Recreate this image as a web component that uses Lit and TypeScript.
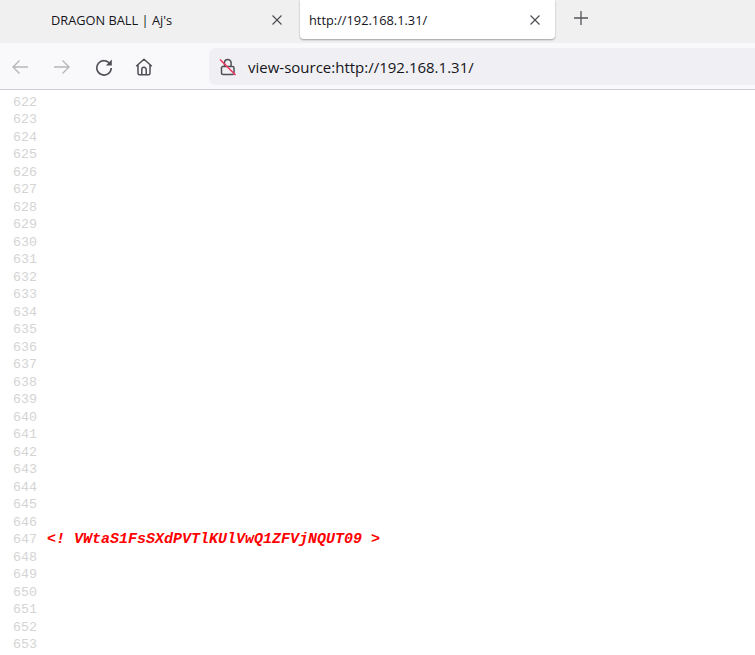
import { LitElement, html, css } from "lit";
import { customElement } from "lit/decorators.js";

const closeIcon = html`<svg class="x" width="12" height="12" viewBox="0 0 12 12"><path d="M1.5 1.5l9 9M10.5 1.5l-9 9" stroke="#4a4a4f" stroke-width="1.1" fill="none"/></svg>`;

@customElement("app-root")
export class AppRoot extends LitElement {
  static styles = css`
    :host { display: block; width: 755px; height: 655px; overflow: hidden; background: #fff; font-family: "Open Sans", "Noto Sans", sans-serif; }
    .tabs { height: 43px; background: #f0f0f0; display: flex; box-sizing: border-box; }
    .tab { display: flex; align-items: center; box-sizing: border-box; height: 39px; font-size: 12.8px; color: #15141a; font-weight: 400; }
    .tab.bg { width: 300px; padding: 0 17px 0 51px; justify-content: space-between; }
    .tab.active { width: 255px; background: #fff; border-radius: 0 0 4px 4px; padding: 0 14px 0 9px; justify-content: space-between; box-shadow: 0 1px 2px rgba(0,0,0,.35); }
    .plus { margin: 10px 0 0 18px; width: 16px; height: 16px; }
    .toolbar { height: 47px; box-sizing: border-box; background: #f9f9fb; border-bottom: 1px solid #cfcfd8; display: flex; align-items: flex-start; }
    .nav { width: 209px; height: 46px; display: flex; align-items: center; padding: 2px 0 0 11px; gap: 24px; box-sizing: border-box; }
    .nav svg { flex: none; display: block; }
    .nav .home { margin-left: -2px; }
    .url { flex: 1; height: 37px; margin-top: 5px; background: #f0f0f4; border-radius: 6px 0 0 6px; display: flex; align-items: center; padding-left: 10px; gap: 11px; font-size: 15px; color: #15141a; }
    .url svg { flex: none; }
    .source { padding-top: 3.9px; font-family: "Liberation Mono", monospace; font-size: 13.33px; line-height: 17.5px; }
    .row { display: flex; height: 17.5px; white-space: pre; }
    .num { width: 37px; text-align: right; color: #d4d4d4; flex: none; margin-right: 10px; }
    .code { color: #f00; font-size: 15px; font-weight: bold; font-style: italic; }
  `;

  render() {
    const rows = [];
    for (let n = 622; n <= 653; n++) rows.push(n);
    return html`
      <div class="tabs">
        <div class="tab bg"><span>DRAGON BALL | Aj's</span>${closeIcon}</div>
        <div class="tab active"><span>http://192.168.1.31/</span>${closeIcon}</div>
        <svg class="plus" viewBox="0 0 16 16"><path d="M8 1v14M1 8h14" stroke="#55555a" stroke-width="1.3" fill="none"/></svg>
      </div>
      <div class="toolbar">
        <div class="nav">
          <svg width="18" height="16" viewBox="0 0 18 16"><path d="M17 8H2M8.5 1.5L2 8l6.5 6.5" stroke="#b6b6bb" stroke-width="1.4" fill="none"/></svg>
          <svg width="18" height="16" viewBox="0 0 18 16"><path d="M1 8h15M9.5 1.5L16 8l-6.5 6.5" stroke="#b6b6bb" stroke-width="1.4" fill="none"/></svg>
          <svg width="18" height="18" viewBox="0 0 18 18"><path d="M15.2 6.2A7.2 7.2 0 1 0 16.2 10" stroke="#4f4f55" stroke-width="1.6" fill="none"/><path d="M16.8 1.5v6h-6z" fill="#4f4f55"/></svg>
          <svg class="home" width="18" height="18" viewBox="0 0 18 18"><path d="M1.2 8.3L9 1.3l7.8 7M3 7v8.2a1.5 1.5 0 0 0 1.5 1.5h9a1.5 1.5 0 0 0 1.5-1.5V7M6.8 16.5v-5a2.2 2.2 0 0 1 4.4 0v5" stroke="#4f4f55" stroke-width="1.5" fill="none" stroke-linejoin="round"/></svg>
        </div>
        <div class="url">
          <svg width="18" height="18" viewBox="0 0 18 18"><path d="M5.5 8V4.8a3.3 3.3 0 0 1 6.6 0V8M3.5 8.5h10a1.5 1.5 0 0 1 1.5 1.5v5a1.5 1.5 0 0 1-1.5 1.5H4a1.5 1.5 0 0 1-1.5-1.5v-5.5z" stroke="#4f4f55" stroke-width="1.5" fill="none"/><path d="M1 1.5l15.5 15.5" stroke="#f0385f" stroke-width="1.6" fill="none"/></svg>
          <span>view-source:http://192.168.1.31/</span>
        </div>
      </div>
      <div class="source">
        ${rows.map((n) => html`<div class="row"><span class="num">${n}</span>${n === 647 ? html`<span class="code">&lt;! VWtaS1FsSXdPVTlKUlVwQ1ZFVjNQUT09 &gt;</span>` : ""}</div>`)}
      </div>
    `;
  }
}
